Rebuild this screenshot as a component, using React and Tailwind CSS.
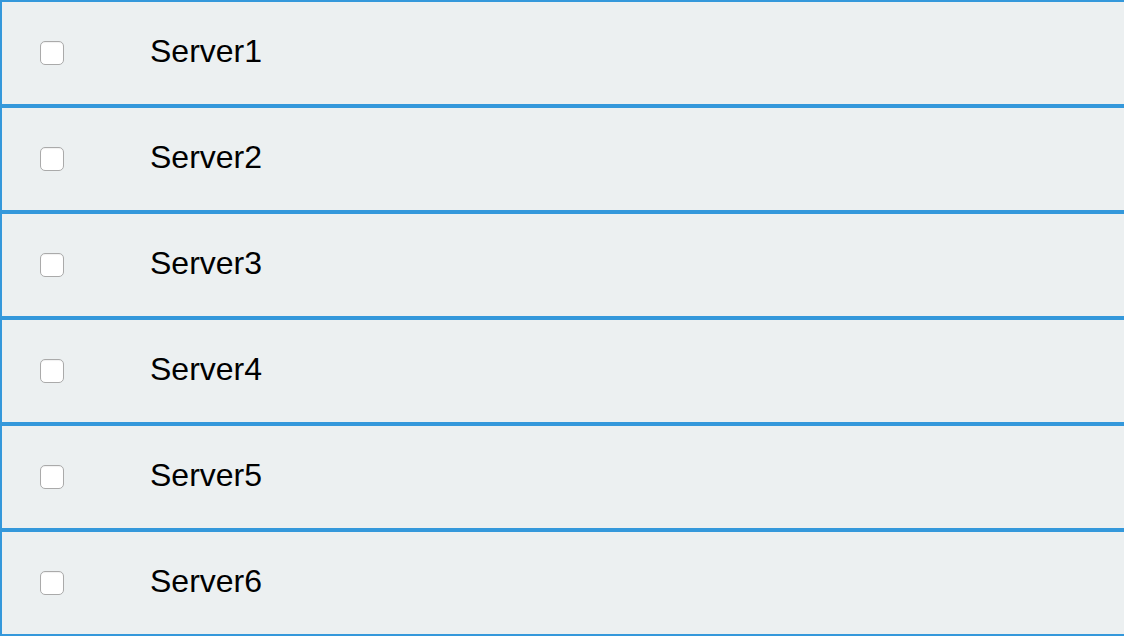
const SERVERS = ["Server1", "Server2", "Server3", "Server4", "Server5", "Server6"];

function ServerRow({ name }) {
  return (
    <label className="flex h-[106px] items-center border-y-2 border-l-2 border-[#3498db] bg-[#ecf0f1] pl-[38px]">
      <span className="h-[24px] w-[24px] shrink-0 rounded-[5px] border border-[#aaaaaa] bg-white shadow-[inset_0_1px_1px_rgba(0,0,0,0.06)]" />
      <span className="mb-[4px] ml-[86px] text-[32px] leading-[37px] text-black">{name}</span>
    </label>
  );
}

export default function App() {
  return (
    <div className="h-[636px] w-[1124px] overflow-hidden bg-white font-['Liberation_Sans',Arial,sans-serif]">
      {SERVERS.map((name) => (
        <ServerRow key={name} name={name} />
      ))}
    </div>
  );
}
